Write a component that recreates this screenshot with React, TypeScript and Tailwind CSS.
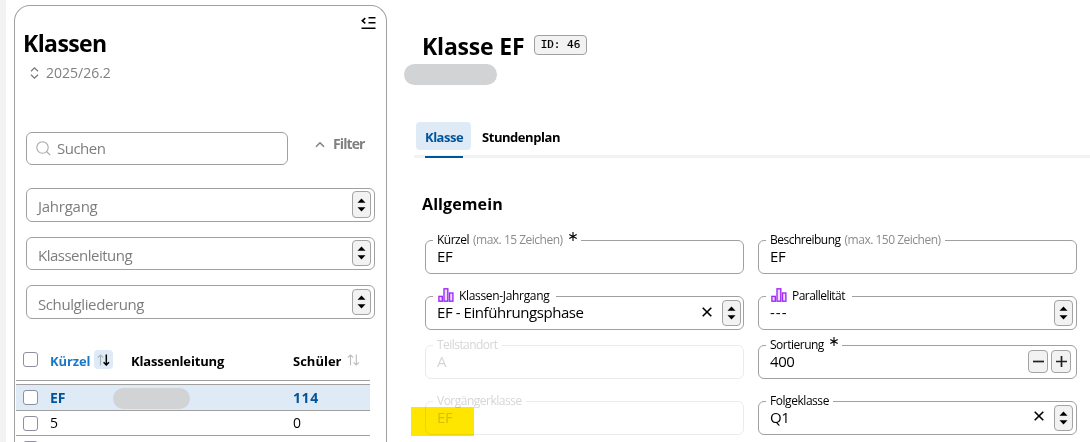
import React from "react";
import clsx from "clsx";

function SelectToggle({ className }: { className?: string }) {
  return (
    <span className={clsx("flex w-[19px] shrink-0 items-center justify-center rounded-[4px] border border-[#a3a3a3] bg-[#f2f2f2]", className)}>
      <svg width="9" height="14" viewBox="0 0 9 14">
        <path d="M4.5 0.5 8.5 4.8h-8zM4.5 13.5 8.5 9.2h-8z" fill="#000" />
      </svg>
    </span>
  );
}

function StatIcon() {
  return (
    <svg width="16" height="14" viewBox="0 0 16 14" className="shrink-0">
      <g fill="#f0dcff" stroke="#a02cfa" strokeWidth="1.4">
        <rect x="0.9" y="8.4" width="3.4" height="4.8" />
        <rect x="6" y="0.8" width="3.8" height="12.4" />
        <rect x="11.5" y="5" width="3.4" height="8.2" />
      </g>
    </svg>
  );
}

function Asterisk() {
  return (
    <svg width="8" height="9" viewBox="0 0 8 9" className="ml-[6px] self-start">
      <path d="M4 0v9M0.3 2.4l7.4 4.2M7.7 2.4L0.3 6.6" stroke="#000" strokeWidth="1.1" />
    </svg>
  );
}

function ClearIcon({ className }: { className?: string }) {
  return (
    <svg width="10" height="10" viewBox="0 0 10 10" className={className}>
      <path d="M0.7 0.7l8.6 8.6M9.3 0.7L0.7 9.3" stroke="#000" strokeWidth="1.6" />
    </svg>
  );
}

function SortArrows({ active }: { active?: boolean }) {
  return (
    <svg width="13" height="12" viewBox="0 0 13 12" fill="none">
      <path d="M3.5 11.5V1M0.8 3.7 3.5 1l2.7 2.7" stroke={active ? "#aab4bd" : "#bcbcbc"} strokeWidth="1.1" />
      <path d="M9.3 0.5V11M6.6 8.3 9.3 11 12 8.3" stroke={active ? "#000" : "#bcbcbc"} strokeWidth={active ? 1.5 : 1.1} />
    </svg>
  );
}

type FieldProps = {
  label: string;
  hint?: string;
  value: string;
  stat?: boolean;
  required?: boolean;
  disabled?: boolean;
  labelClass?: string;
  valueClass?: string;
  children?: React.ReactNode;
};

function Field({ label, hint, value, stat, required, disabled, labelClass = "tracking-[-0.5px]", valueClass = "tracking-[-0.43px]", children }: FieldProps) {
  return (
    <div className={clsx("relative flex h-[34px] w-[319px] rounded-[6px] border pl-[11px]", disabled ? "border-[#ebebeb] text-[#d6d6d6]" : "border-[#a0a0a0] text-black")}>
      <div className={clsx("absolute -top-[9px] left-[7px] flex h-4 items-center whitespace-nowrap bg-white px-1 text-[12px] leading-4", stat && "pr-[7px]", labelClass)}>
        {stat && <span className="ml-px mr-[5px] -mt-[2px]"><StatIcon /></span>}
        <span>{label}</span>
        {hint && <span className="ml-1 text-[#8c8c8c]">{hint}</span>}
        {required && <Asterisk />}
      </div>
      <span className={clsx("grow whitespace-nowrap pt-[3px] text-[15px] leading-6", valueClass)}>{value}</span>
      {children}
    </div>
  );
}

function FilterSelect({ label, className, textClass, toggle }: { label: string; className: string; textClass: string; toggle: string }) {
  return (
    <div className={clsx("flex w-[349px] rounded-[6px] border border-[#a0a0a0] pl-[11px] pr-[3px] text-[15px] leading-6 text-[#7d7d7d]", className)}>
      <span className={clsx("grow", textClass)}>{label}</span>
      <SelectToggle className={toggle} />
    </div>
  );
}

function Checkbox() {
  return <span className="block size-[15px] shrink-0 rounded-[3px] border border-[#8f8f9d] bg-white" />;
}

export default function App() {
  return (
    <div className="flex h-[442px] w-[1090px] overflow-hidden bg-white font-['Open_Sans','Noto_Sans',sans-serif] text-black">
      <div className="w-[6px] shrink-0 bg-[#f2f2f2]" />

      <aside className="ml-2 mt-[5px] h-[460px] w-[373px] shrink-0 rounded-t-[16px] border border-b-0 border-[#a0a0a0]">
        <div className="flex h-[126px] justify-between">
          <div className="pl-2 pt-[21px]">
            <h1 className="text-[23px] font-bold leading-8 tracking-[-0.6px]">Klassen</h1>
            <div className="mt-[2px] flex items-center pl-[7px] text-[#808080]">
              <svg width="9" height="12" viewBox="0 0 9 12" fill="none" stroke="#777" strokeWidth="1.2">
                <path d="M1 4.2 4.5 0.9 8 4.2M1 7.8l3.5 3.3L8 7.8" />
              </svg>
              <span className="ml-[7px] text-[14px] leading-6">2025/26.2</span>
            </div>
          </div>
          <svg width="15" height="13" viewBox="0 0 15 13" className="mr-[10px] mt-[11px]" fill="none" stroke="#000" strokeWidth="1.6">
            <path d="M4.3 1.2 1.3 3.8l3 2.6M7.5 0.8h7M7.5 5.8h7M0.5 11.3h14" />
          </svg>
        </div>

        <div className="ml-[11px] flex items-center">
          <div className="flex h-[33px] w-[262px] items-center rounded-[6px] border border-[#a0a0a0] pl-[9px]">
            <svg width="15" height="15" viewBox="0 0 15 15" fill="none" stroke="#a8a8a8" strokeWidth="1.1">
              <circle cx="6.5" cy="6.5" r="5.7" />
              <path d="m10.6 10.6 3.6 3.4" />
            </svg>
            <span className="-mt-[2px] ml-[6px] text-[15px] leading-6 tracking-[-0.5px] text-[#7d7d7d]">Suchen</span>
          </div>
          <svg width="10" height="7" viewBox="0 0 10 7" className="ml-[27px] -mt-[8px]" fill="none" stroke="#808080" strokeWidth="1.5">
            <path d="m1 5.7 4-4 4 4" />
          </svg>
          <span className="-mt-[10px] ml-2 text-[14px] font-bold leading-5 tracking-[-0.9px] text-[#808080]">Filter</span>
        </div>

        <div className="ml-[11px] mt-[23px]">
          <FilterSelect label="Jahrgang" className="h-[34px]" textClass="pt-[5px] tracking-[-0.25px]" toggle="mt-[2px] h-[27px]" />
          <FilterSelect label="Klassenleitung" className="mt-[15px] h-[33px]" textClass="pt-[5px] tracking-[-0.5px]" toggle="mt-[2px] h-[26px]" />
          <FilterSelect label="Schulgliederung" className="mt-[15px] h-[34px]" textClass="pt-[6px] tracking-[-0.4px]" toggle="mt-[3px] h-[26px]" />
        </div>

        <div className="ml-px mt-[24px] w-[354px] text-[14px] leading-[25px]">
          <div className="flex h-[38px] border-b border-[#a0a0a0] pl-[7px] text-[13px] font-bold">
            <span className="mt-[9px]"><Checkbox /></span>
            <span className="ml-3 mt-[6px] w-[44px] tracking-[-0.1px] text-[#1a78c8]">Kürzel</span>
            <span className="mt-[7px] flex h-[19px] w-[19px] items-center justify-center rounded-[4px] bg-[#deebf7]"><SortArrows active /></span>
            <span className="ml-[18px] mt-[6px] w-[162px] tracking-[-0.15px]">Klassenleitung</span>
            <span className="mt-[6px] w-[54px]">Schüler</span>
            <span className="mt-[11px]"><SortArrows /></span>
          </div>
          <div className="mt-[3px] flex h-[27px] items-center border-y border-[#a0a0a0] bg-[#deebf7] pl-[7px] font-bold text-[#00549a]">
            <Checkbox />
            <span className="ml-3 w-[63px]">EF</span>
            <span className="mt-px h-[21px] w-[77px] rounded-full bg-[#d1d3d4]" />
            <span className="ml-[103px] tracking-[0.6px]">114</span>
          </div>
          <div className="flex h-[25px] items-center border-b border-[#a0a0a0] pl-[7px]">
            <Checkbox />
            <span className="-mt-px ml-3 w-[243px]">5</span>
            <span className="-mt-px">0</span>
          </div>
          <div className="pl-[7px] pt-[5px]"><Checkbox /></div>
        </div>
      </aside>

      <main className="ml-[17px] flex w-[686px] shrink-0 flex-col">
        <div className="flex h-[64px] pl-[18px] pt-[30px]">
          <h2 className="w-[112px] whitespace-nowrap text-[23px] font-bold leading-8 tracking-[-0.2px]">Klasse EF</h2>
          <span className="mt-[5px] flex h-[20px] w-[53px] items-center justify-center rounded-[4px] border border-[#a0a0a0] bg-[#f2f2f2] pt-px font-['DejaVu_Sans_Mono',monospace] text-[11px] [-webkit-text-stroke:0.2px_black]">ID: 46</span>
        </div>
        <div className="h-[21px] w-[93px] rounded-full bg-[#d1d3d4]" />

        <nav className="ml-[10px] mt-[37px]">
          <div className="flex pl-[2px] text-[13px] font-bold leading-7">
            <span className="h-7 w-[55px] rounded-[4px] bg-[#deebf7] pl-[9px] pt-px tracking-[-0.5px] text-[#00549a]">Klasse</span>
            <span className="pl-[11px] pt-px tracking-[-0.45px]">Stundenplan</span>
          </div>
          <div className="mt-[4px] flex h-[3px] items-end rounded-l-full bg-[#f2f2f2] pl-[11px]">
            <div className="h-[2px] w-[38px] bg-[#00549a]" />
          </div>
        </nav>

        <h3 className="ml-[18px] mt-[34px] text-[16px] font-bold leading-6 tracking-[0.1px]">Allgemein</h3>

        <div className="ml-[21px] mt-[24px] flex gap-[14px]">
          <div>
            <Field label="Kürzel" hint="(max. 15 Zeichen)" value="EF" required />
            <div className="mt-[22px]">
              <Field label="Klassen-Jahrgang" value="EF - Einführungsphase" stat labelClass="tracking-[-0.33px]">
                <ClearIcon className="mr-[10px] mt-[10px]" />
                <SelectToggle className="mr-[2px] mt-[3px] h-[26px]" />
              </Field>
            </div>
            <div className="mt-[15px]">
              <Field label="Teilstandort" value="A" disabled labelClass="tracking-[-0.55px]" />
            </div>
            <div className="relative mt-[22px]">
              <Field label="Vorgängerklasse" value="EF" disabled />
              <div className="absolute -left-[14px] top-[6px] h-[29px] w-[63px] bg-[#ffe600] mix-blend-multiply" />
            </div>
          </div>
          <div>
            <Field label="Beschreibung" hint="(max. 150 Zeichen)" value="EF" />
            <div className="mt-[22px]">
              <Field label="Parallelität" value="---" stat labelClass="tracking-[-0.55px]" valueClass="tracking-[1px]">
                <SelectToggle className="mr-[3px] mt-[3px] h-[26px]" />
              </Field>
            </div>
            <div className="mt-[15px]">
              <Field label="Sortierung" value="400" required>
                <span className="mr-[5px] mt-[4px] flex gap-[3px]">
                  {["M3 9.5h11", "M3 9.5h11M8.5 4v11"].map((d) => (
                    <span key={d} className="flex h-[23px] w-5 items-center justify-center rounded-[4px] border border-[#a3a3a3] bg-[#f2f2f2]">
                      <svg width="17" height="19" viewBox="0 0 17 19"><path d={d} stroke="#222" strokeWidth="1.7" /></svg>
                    </span>
                  ))}
                </span>
              </Field>
            </div>
            <div className="mt-[22px]">
              <Field label="Folgeklasse" value="Q1" labelClass="tracking-[-0.45px]">
                <ClearIcon className="mr-[10px] mt-[9px]" />
                <SelectToggle className="mr-[3px] mt-[3px] h-[26px]" />
              </Field>
            </div>
          </div>
        </div>
      </main>
    </div>
  );
}
